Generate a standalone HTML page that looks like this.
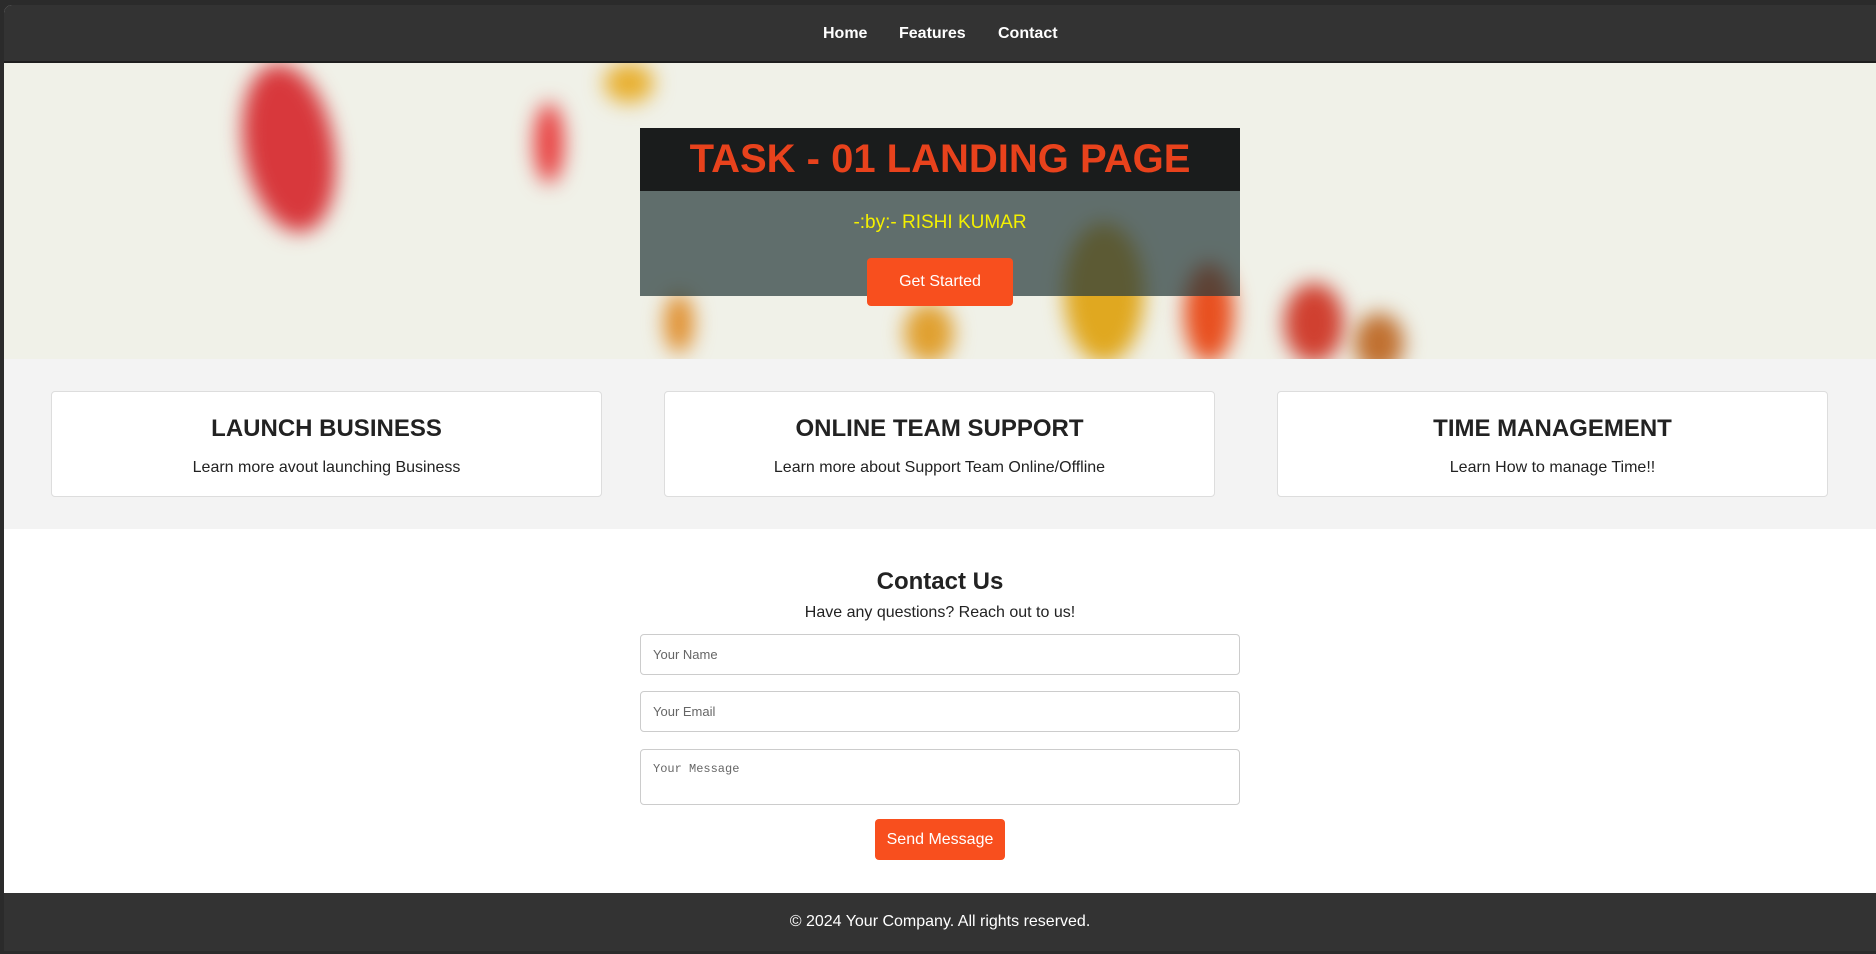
<!DOCTYPE html>
<html><head><meta charset="utf-8"><style>
*{box-sizing:border-box;margin:0;padding:0}
html,body{width:1876px;height:954px;overflow:hidden;background:#2b2b2b;font-family:"Liberation Sans",Arial,sans-serif}
#page{position:absolute;left:4px;top:5px;width:1872px;height:946px;background:#fff;border-top-left-radius:8px;overflow:hidden}
nav{height:58px;background:#333;border-bottom:2px solid #1e1e1e;text-align:center;padding-left:0}
nav a{position:absolute;top:20px;color:#fff;font-weight:bold;font-size:16px;text-decoration:none}
.hero{position:absolute;left:0;top:58px;width:1872px;height:296px;background:#f0f1e8;overflow:hidden}
.blob{position:absolute;border-radius:50%;filter:blur(10px)}
.box{position:absolute;left:636px;top:65px;width:600px;height:168px;background:rgba(40,60,60,.72)}
.box .t{height:63px;background:rgba(20,22,22,.93);color:#e8421c;font-weight:bold;font-size:40px;text-align:center;line-height:63px}
.box .s{color:#f4f000;font-size:19px;text-align:center;margin-top:21px}
.btn{position:absolute;background:#f84f1e;color:#fff;border-radius:4px;text-align:center;font-size:16px}
.feat{position:absolute;left:0;top:354px;width:1872px;height:170px;background:#f3f3f3}
.card{position:absolute;top:32px;width:551px;height:106px;background:#fff;border:1px solid #ddd;border-radius:4px;text-align:center}
.card h3{font-size:24px;color:#222;margin-top:23px}
.card p{font-size:16px;color:#222;margin-top:16px}
.contact{position:absolute;left:0;top:524px;width:1872px;text-align:center}
.inp{position:absolute;left:636px;width:600px;border:1px solid #ccc;border-radius:4px;background:#fff;font-size:13px;color:#666;text-align:left;padding-left:12px}
footer{position:absolute;left:0;top:888px;width:1872px;height:58px;background:#333;color:#fff;text-align:center;font-size:16px;line-height:58px}
</style></head><body><div id="page">
<nav><a style="left:819px">Home</a><a style="left:895px">Features</a><a style="left:994px">Contact</a></nav>
<div class="hero">
<div class="blob" style="left:240px;top:0;width:90px;height:170px;background:#d8383c;transform:rotate(-10deg)"></div>
<div class="blob" style="left:600px;top:0;width:50px;height:40px;background:#e8b030"></div>
<div class="blob" style="left:530px;top:40px;width:30px;height:80px;background:#e84040"></div>
<div class="blob" style="left:1060px;top:160px;width:80px;height:140px;background:#e0a820"></div>
<div class="blob" style="left:1180px;top:200px;width:50px;height:100px;background:#e85020"></div>
<div class="blob" style="left:1280px;top:220px;width:60px;height:80px;background:#d04030"></div>
<div class="blob" style="left:1350px;top:250px;width:50px;height:60px;background:#c07030"></div>
<div class="blob" style="left:900px;top:240px;width:50px;height:60px;background:#e0a030"></div>
<div class="blob" style="left:660px;top:230px;width:30px;height:60px;background:#e09030"></div>
<div class="box"><div class="t">TASK - 01 LANDING PAGE</div><div class="s">-:by:- RISHI KUMAR</div></div>
<div class="btn" style="left:863px;top:195px;width:146px;height:48px;line-height:48px">Get Started</div>
</div>
<div class="feat">
<div class="card" style="left:47px"><h3>LAUNCH BUSINESS</h3><p>Learn more avout launching Business</p></div>
<div class="card" style="left:660px"><h3>ONLINE TEAM SUPPORT</h3><p>Learn more about Support Team Online/Offline</p></div>
<div class="card" style="left:1273px"><h3>TIME MANAGEMENT</h3><p>Learn How to manage Time!!</p></div>
</div>
<div class="contact">
<div style="position:absolute;left:0;width:1872px;top:39px;font-size:24px;font-weight:bold;color:#222">Contact Us</div>
<div style="position:absolute;left:0;width:1872px;top:75px;font-size:16px;color:#222">Have any questions? Reach out to us!</div>
<div class="inp" style="top:105px;height:41px;line-height:39px">Your Name</div>
<div class="inp" style="top:162px;height:41px;line-height:39px">Your Email</div>
<div class="inp" style="top:220px;height:56px;padding-top:12px;font-family:'Liberation Mono',monospace;font-size:12px">Your Message</div>
<div class="btn" style="left:871px;top:290px;width:130px;height:41px;line-height:41px">Send Message</div>
</div>
<footer>© 2024 Your Company. All rights reserved.</footer>
</div></body></html>
